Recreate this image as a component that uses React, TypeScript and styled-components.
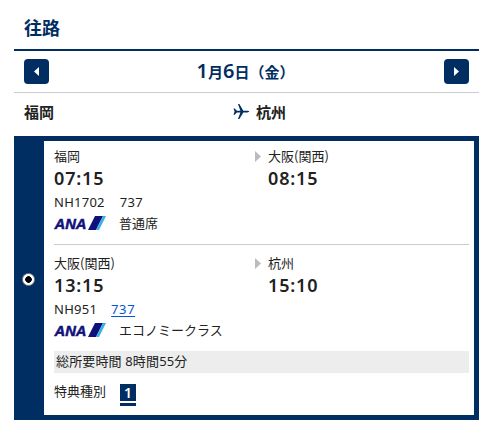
import React from "react";
import styled, { createGlobalStyle } from "styled-components";

const navy = "#002d62";
const ink = "#222222";

const GlobalStyle = createGlobalStyle`
  * { box-sizing: border-box; }
  body {
    margin: 0;
    background: #ffffff;
    color: ${ink};
    font-family: "Noto Sans", "Noto Sans CJK JP", sans-serif;
    font-size: 13px;
  }
`;

const Page = styled.main`
  width: 465px;
  height: 425px;
  margin-left: 14px;
  overflow: hidden;
`;

const Title = styled.h1`
  height: 51px;
  margin: 0;
  padding: 5px 0 0 10px;
  border-bottom: 2px solid ${navy};
  color: ${navy};
  font: 700 18px/44px "Noto Sans CJK JP", sans-serif;
`;

const DateBar = styled.nav`
  height: 42px;
  display: flex;
  align-items: center;
  justify-content: space-between;
  padding: 0 10px;
  border-bottom: 1px solid #cccccc;
`;

const StepButton = styled.button`
  width: 25px;
  height: 25px;
  padding: 0;
  border: 0;
  border-radius: 4px;
  background: ${navy};
  display: flex;
  align-items: center;
  justify-content: center;
`;

const DateLabel = styled.h2`
  margin: 0 2px 0 0;
  display: flex;
  align-items: baseline;
  color: ${navy};
  font: 700 15px/40px "Noto Sans", "Noto Sans CJK JP", sans-serif;
`;

const DateNumber = styled.span`
  font-size: 20px;
  font-weight: 600;
`;

const Route = styled.div`
  height: 43px;
  display: grid;
  grid-template-columns: 209px 1fr;
  align-items: center;
  padding: 0 10px 6px;
  font: 700 15px/22px "Noto Sans CJK JP", sans-serif;
`;

const Destination = styled.div`
  display: flex;
  align-items: center;
  gap: 6px;
`;

const Option = styled.section`
  height: 284px;
  display: grid;
  grid-template-columns: 25px 1fr;
  border: 5px solid ${navy};
  background: ${navy};
`;

const RadioCell = styled.div`
  display: flex;
  align-items: center;
  padding: 3px 0 0 3px;
`;

const Radio = styled.span`
  width: 13px;
  height: 13px;
  border: 1px solid #8c8c8c;
  border-radius: 50%;
  background: radial-gradient(circle, #000 0 3px, #fff 3.6px);
`;

const Details = styled.div`
  padding: 5px 5px 0 10px;
  background: #ffffff;
`;

const Segment = styled.article<{ $divided?: boolean }>`
  height: ${(p) => (p.$divided ? 99 : 97)}px;
  border-bottom: ${(p) => (p.$divided ? "1px solid #cccccc" : "0")};
  margin-bottom: ${(p) => (p.$divided ? 8 : 1)}px;
`;

const Stations = styled.div`
  display: grid;
  grid-template-columns: 201px 1fr;
`;

const Station = styled.div`
  height: 19px;
  display: flex;
  align-items: center;
  gap: 7px;
  font: 400 13px/19px "Noto Sans CJK JP", sans-serif;
`;

const StationArrow = styled.svg`
  margin-top: 2px;
`;

const Time = styled.div<{ $arrival?: boolean }>`
  height: 26px;
  padding-left: ${(p) => (p.$arrival ? 13 : 0)}px;
  font-size: 18px;
  font-weight: 600;
  line-height: 26px;
  letter-spacing: 0.85px;
`;

const FlightLine = styled.div`
  height: 22px;
  display: flex;
  gap: 15px;
  line-height: 23px;
  letter-spacing: 0.25px;
`;

const AircraftLink = styled.a`
  margin-left: -1px;
  color: #0057d8;
  letter-spacing: 0.6px;
  text-decoration: underline;
  text-underline-offset: 2px;
`;

const CabinLine = styled.div`
  height: 19px;
  display: grid;
  grid-template-columns: 65px 1fr;
  align-items: center;
  font: 400 13px/19px "Noto Sans CJK JP", sans-serif;
`;

const Duration = styled.div`
  height: 22px;
  padding-left: 2px;
  background: #ededed;
  line-height: 21px;
  letter-spacing: 0.15px;
`;

const Award = styled.div`
  display: flex;
  height: 36px;
  align-items: center;
  gap: 14px;
`;

const AwardLabel = styled.span`
  margin-top: -2px;
`;

const AwardBadge = styled.span`
  width: 16px;
  height: 22px;
  margin-top: 7px;
  padding-bottom: 2px;
  border-bottom: 3px solid ${navy};
  background: ${navy} content-box;
  color: #ffffff;
  text-align: center;
  font: 600 14px/17px "Noto Sans", sans-serif;
`;

const Arrow = ({ left = false }: { left?: boolean }) => (
  <svg width="5" height="9" viewBox="0 0 5 9" aria-hidden="true">
    <path d={left ? "M5 0V9L0 4.5Z" : "M0 0V9L5 4.5Z"} fill="#fff" />
  </svg>
);

const Plane = () => (
  <svg width="17" height="17" viewBox="0 0 17 17" aria-hidden="true">
    <path
      d="M.5 5.5H1.7L3.9 7.8H7.4L5 1H6.4L10.3 7.8H14.2Q16.3 8 16.3 8.6T14.2 9.4H10.3L6.4 16H5L7.4 9.4H3.9L1.7 11.7H.5L1.6 8.6Z"
      fill={navy}
    />
  </svg>
);

const AnaLogo = () => (
  <svg width="52" height="14" viewBox="0 0 52 14" overflow="visible" role="img" aria-label="ANA">
    <text
      x="0.5" y="13" fill="#10107c" stroke="#10107c" strokeWidth=".5"
      fontFamily="Liberation Sans" fontWeight="700" fontStyle="italic"
      fontSize="14.5" textLength="32" lengthAdjust="spacingAndGlyphs"
    >ANA</text>
    <path d="M41 0H49L42 14H34Z" fill="#10107c" />
    <path d="M49 0H52L45 14H42Z" fill="#36b1e5" />
  </svg>
);

interface Flight {
  from: string; to: string; departs: string; arrives: string;
  number: string; aircraft: string; cabin: string; linked?: boolean;
}

const flights: Flight[] = [
  { from: "福岡", to: "大阪(関西)", departs: "07:15", arrives: "08:15", number: "NH1702", aircraft: "737", cabin: "普通席" },
  { from: "大阪(関西)", to: "杭州", departs: "13:15", arrives: "15:10", number: "NH951", aircraft: "737", cabin: "エコノミークラス", linked: true },
];

const FlightSegment = ({ flight, divided }: { flight: Flight; divided: boolean }) => (
  <Segment $divided={divided}>
    <Stations>
      <Station>{flight.from}</Station>
      <Station>
        <StationArrow width="6" height="11" viewBox="0 0 6 11" aria-hidden="true">
          <path d="M0 0V11L6 5.5Z" fill="#bbb" />
        </StationArrow>
        {flight.to}
      </Station>
      <Time>{flight.departs}</Time>
      <Time $arrival>{flight.arrives}</Time>
    </Stations>
    <FlightLine>
      <span>{flight.number}</span>
      {flight.linked ? <AircraftLink href="#">{flight.aircraft}</AircraftLink> : <span>{flight.aircraft}</span>}
    </FlightLine>
    <CabinLine><AnaLogo /><span>{flight.cabin}</span></CabinLine>
  </Segment>
);

export default function App() {
  return (
    <>
      <GlobalStyle />
      <Page>
        <Title>往路</Title>
        <DateBar>
          <StepButton aria-label="前の日"><Arrow left /></StepButton>
          <DateLabel>
            <DateNumber>1</DateNumber>月<DateNumber>6</DateNumber>日（金）
          </DateLabel>
          <StepButton aria-label="次の日"><Arrow /></StepButton>
        </DateBar>
        <Route>
          <span>福岡</span>
          <Destination><Plane />杭州</Destination>
        </Route>
        <Option>
          <RadioCell><Radio role="radio" aria-checked="true" /></RadioCell>
          <Details>
            {flights.map((flight, i) => (
              <FlightSegment key={flight.number} flight={flight} divided={i === 0} />
            ))}
            <Duration>総所要時間 8時間55分</Duration>
            <Award><AwardLabel>特典種別</AwardLabel><AwardBadge>1</AwardBadge></Award>
          </Details>
        </Option>
      </Page>
    </>
  );
}
